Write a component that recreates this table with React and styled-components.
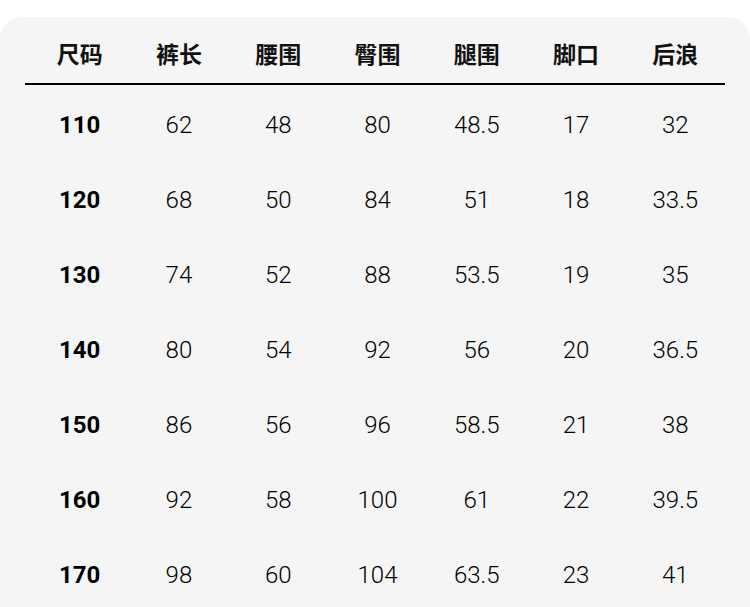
import React from 'react'
import styled, { createGlobalStyle } from 'styled-components'

const GlobalStyle = createGlobalStyle`
  html, body {
    margin: 0;
    padding: 0;
    background: #ffffff;
  }
  body {
    font-family: Roboto, "Noto Sans CJK SC", sans-serif;
    color: #1a1a1a;
  }
`

const Card = styled.div`
  margin-top: 17px;
  width: 750px;
  height: 590px;
  box-sizing: border-box;
  background: #f5f5f5;
  border-radius: 22px 22px 0 0;
  padding: 0 25px;
  overflow: hidden;
`

const Row = styled.div`
  display: grid;
  grid-template-columns: repeat(7, 1fr);
  align-items: center;
  padding-left: 5px;
  height: ${(p) => (p.$head ? '68px' : '75px')};
  padding-top: ${(p) => (p.$head ? '6px' : '5px')};
  box-sizing: border-box;
  border-bottom: ${(p) => (p.$head ? '2px solid #000' : 'none')};
`

const Cell = styled.div`
  text-align: center;
  line-height: 1;
  font-weight: ${(p) => (p.$bold ? 700 : 300)};
  font-size: ${(p) => (p.$head ? '23px' : '24px')};
  font-family: ${(p) =>
    p.$head ? '"Noto Sans CJK SC", sans-serif' : 'Roboto, "Noto Sans CJK SC", sans-serif'};
  color: ${(p) => (p.$head ? '#111' : '#000')};
`

const headers = ['尺码', '裤长', '腰围', '臀围', '腿围', '脚口', '后浪']

const rows = [
  ['110', '62', '48', '80', '48.5', '17', '32'],
  ['120', '68', '50', '84', '51', '18', '33.5'],
  ['130', '74', '52', '88', '53.5', '19', '35'],
  ['140', '80', '54', '92', '56', '20', '36.5'],
  ['150', '86', '56', '96', '58.5', '21', '38'],
  ['160', '92', '58', '100', '61', '22', '39.5'],
  ['170', '98', '60', '104', '63.5', '23', '41'],
]

export default function App() {
  return (
    <>
      <GlobalStyle />
      <Card>
        <Row $head>
          {headers.map((h) => (
            <Cell key={h} $head $bold>{h}</Cell>
          ))}
        </Row>
        {rows.map((r) => (
          <Row key={r[0]}>
            {r.map((v, i) => (
              <Cell key={i} $bold={i === 0}>{v}</Cell>
            ))}
          </Row>
        ))}
      </Card>
    </>
  )
}
